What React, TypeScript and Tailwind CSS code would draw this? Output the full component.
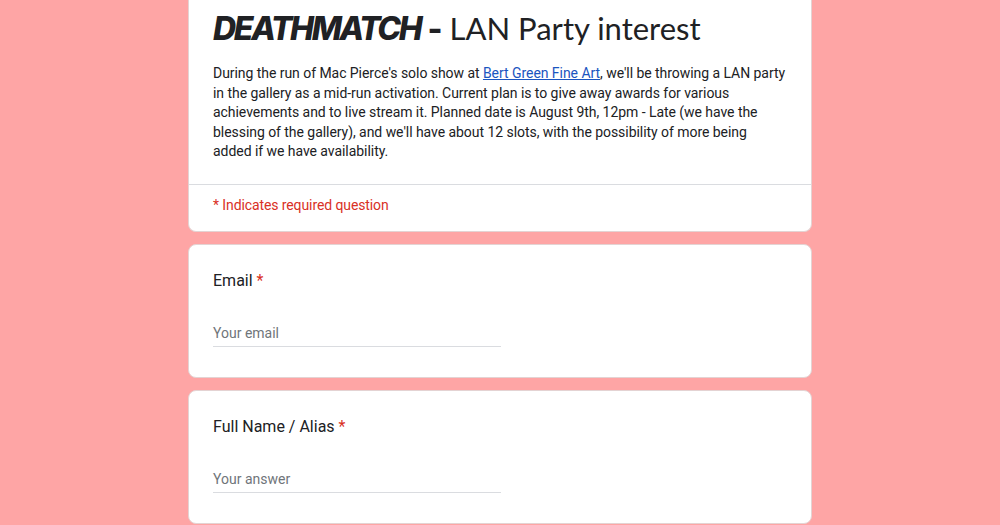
import React from "react";

export default function App() {
  return (
    <div className="w-[1000px] h-[525px] overflow-hidden bg-[#fea5a5]" style={{ fontFamily: "Roboto, 'Liberation Sans', sans-serif" }}>
      <div className="w-[624px] mx-auto flex flex-col gap-[12px]">
        <div className="bg-white rounded-b-lg border border-t-0 border-[#e4d3d3]">
          <div className="pl-6 pr-[25px] pt-[4px] pb-[22px]">
            <h1 className="text-[32px] leading-[48px] text-[#202124]" style={{ fontFamily: "Lato, sans-serif" }}>
              <span className="font-extrabold italic tracking-[-2.3px]" style={{ fontFamily: "Inter, sans-serif" }}>DEATHMATCH</span>
              <span className="font-extrabold" style={{ fontFamily: "Inter, sans-serif" }}> - </span>
              <span className="font-normal text-[31px]">LAN Party interest</span>
            </h1>
            <p className="mt-[11px] text-[14px] leading-[19.5px] tracking-[-0.05px] text-[#202124]">
              During the run of Mac Pierce's solo show at{" "}
              <a className="text-[#1a55c0] underline">Bert Green Fine Art</a>, we'll be throwing a LAN party in the gallery as a mid-run activation. Current plan is to give away awards for various achievements and to live stream it. Planned date is August 9th, 12pm - Late (we have the blessing of the gallery), and we'll have about 12 slots, with the possibility of more being added if we have availability.
            </p>
          </div>
          <div className="border-t border-[#dadce0] px-6 pt-[10px] pb-[16px] text-[14px] leading-[20px] tracking-[-0.1px] text-[#d93025]">
            * Indicates required question
          </div>
        </div>

        <Question label="Email" placeholder="Your email" />
        <Question label="Full Name / Alias" placeholder="Your answer" />
      </div>
    </div>
  );
}

function Question({ label, placeholder }: { label: string; placeholder: string }) {
  return (
    <div className="bg-white rounded-lg border border-[#e4d3d3] px-6 pt-[24px] pb-[30px]">
      <div className="text-[16px] leading-[24px] text-[#202124]">
        {label} <span className="text-[#d93025]">*</span>
      </div>
      <div className="mt-[30px] w-[288px] border-b border-[#dadce0] pb-[3px] text-[14px] leading-[20px] text-[#70757a]">
        {placeholder}
      </div>
    </div>
  );
}
